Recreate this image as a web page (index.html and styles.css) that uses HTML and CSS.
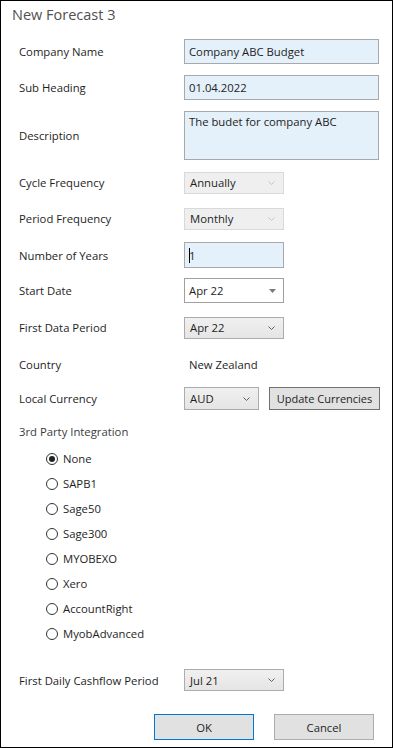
FILE: index.html
```html
<!DOCTYPE html>
<html lang="en">

<head>
    <meta charset="utf-8">
    <meta name="viewport" content="width=device-width, initial-scale=1.0">
    <title>New Forecast 3</title>
    <link rel="stylesheet" href="styles.css">
</head>

<body>
    <main class="dialog">
        <div class="titel">New Forecast 3</div>

        <section class="form">
            <div class="row">
                <label class="lbl">Company Name</label>
                <div class="tekstboks">Company ABC Budget</div>
            </div>
            <div class="row">
                <label class="lbl">Sub Heading</label>
                <div class="tekstboks">01.04.2022</div>
            </div>
            <div class="row row-hoej">
                <label class="lbl">Description</label>
                <div class="tekstboks tekstboks-stor">The budet for company ABC</div>
            </div>
            <div class="row row-35">
                <label class="lbl">Cycle Frequency</label>
                <div class="combo combo-slukket">Annually
                    <svg class="pil" width="7" height="4" viewBox="0 0 7 4"><polyline points="0.5,0.5 3.5,3.5 6.5,0.5" fill="none" stroke="#c4c4c4" stroke-width="1"/></svg>
                </div>
            </div>
            <div class="row row-37">
                <label class="lbl">Period Frequency</label>
                <div class="combo combo-slukket">Monthly
                    <svg class="pil" width="7" height="4" viewBox="0 0 7 4"><polyline points="0.5,0.5 3.5,3.5 6.5,0.5" fill="none" stroke="#c4c4c4" stroke-width="1"/></svg>
                </div>
            </div>
            <div class="row">
                <label class="lbl">Number of Years</label>
                <div class="tekstboks tekstboks-kort"><span class="markoer"></span>1</div>
            </div>
            <div class="row row-35">
                <label class="lbl">Start Date</label>
                <div class="dato">Apr 22
                    <svg class="trekant" width="7" height="4" viewBox="0 0 7 4"><polygon points="0,0 7,0 3.5,4" fill="#7a7a7a"/></svg>
                </div>
            </div>
            <div class="row row-39">
                <label class="lbl">First Data Period</label>
                <div class="combo">Apr 22
                    <svg class="pil" width="7" height="4" viewBox="0 0 7 4"><polyline points="0.5,0.5 3.5,3.5 6.5,0.5" fill="none" stroke="#606060" stroke-width="1"/></svg>
                </div>
            </div>
            <div class="row row-34">
                <label class="lbl">Country</label>
                <span class="vaerdi">New Zealand</span>
            </div>
            <div class="row row-35">
                <label class="lbl">Local Currency</label>
                <div class="combo combo-smal">AUD
                    <svg class="pil" width="7" height="4" viewBox="0 0 7 4"><polyline points="0.5,0.5 3.5,3.5 6.5,0.5" fill="none" stroke="#606060" stroke-width="1"/></svg>
                </div>
                <button class="knap knap-opdater">Update Currencies</button>
            </div>
            <div class="row row-30">
                <span class="gruppe">3rd Party Integration</span>
            </div>

            <div class="radioer">
                <div class="radio"><span class="cirkel valgt"></span>None</div>
                <div class="radio"><span class="cirkel"></span>SAPB1</div>
                <div class="radio"><span class="cirkel"></span>Sage50</div>
                <div class="radio"><span class="cirkel"></span>Sage300</div>
                <div class="radio"><span class="cirkel"></span>MYOBEXO</div>
                <div class="radio"><span class="cirkel"></span>Xero</div>
                <div class="radio"><span class="cirkel"></span>AccountRight</div>
                <div class="radio"><span class="cirkel"></span>MyobAdvanced</div>
            </div>

            <div class="row row-cash">
                <label class="lbl">First Daily Cashflow Period</label>
                <div class="combo">Jul 21
                    <svg class="pil" width="7" height="4" viewBox="0 0 7 4"><polyline points="0.5,0.5 3.5,3.5 6.5,0.5" fill="none" stroke="#606060" stroke-width="1"/></svg>
                </div>
            </div>
        </section>

        <footer class="knapper">
            <button class="knap knap-ok">OK</button>
            <button class="knap">Cancel</button>
        </footer>
    </main>
</body>

</html>
```

FILE: styles.css
```css
* {
    box-sizing: border-box;
}

body {
    margin: 0;
    font-family: 'Open Sans', 'Noto Sans', sans-serif;
    font-size: 11.3px;
    color: #1e1e1e;
    background: #fff;
}

.dialog {
    width: 393px;
    height: 748px;
    border: 1px solid #000;
    display: flex;
    flex-direction: column;
}

.titel {
    height: 32px;
    padding: 4px 0 0 11px;
    font-size: 14.5px;
    color: #505050;
}

.form {
    padding-left: 18px;
}

.row {
    display: flex;
    align-items: center;
    height: 36px;
}

.row-hoej {
    height: 60px;
}

.row-35 {
    height: 35px;
}

.row-37 {
    height: 37px;
}

.row-39 {
    height: 39px;
}

.row-34 {
    height: 34px;
}

.row-30 {
    height: 30px;
}

.row-cash {
    margin-top: 16px;
}

.lbl {
    width: 165px;
    flex: none;
}

.tekstboks {
    width: 195px;
    height: 25px;
    border: 1px solid #a9a9a9;
    background: #e4f0fa;
    padding: 4px 4px;
    line-height: 15px;
}

.tekstboks-stor {
    height: 49px;
    padding-top: 2px;
}

.tekstboks-kort {
    width: 100px;
    height: 26px;
    display: flex;
    align-items: center;
}

.markoer {
    width: 1px;
    height: 15px;
    background: #000;
    margin-right: -1px;
}

.combo {
    width: 100px;
    height: 22px;
    border: 1px solid #acacac;
    background: linear-gradient(#f0f0f0, #e5e5e5);
    display: flex;
    align-items: center;
    justify-content: space-between;
    padding: 0 8px 0 5px;
}

.combo-slukket {
    background: #efefef;
    border-color: #d9d9d9;
}

.combo-smal {
    width: 75px;
    height: 23px;
}

.dato {
    width: 100px;
    height: 25px;
    border: 1px solid #a0a0a0;
    background: #fff;
    display: flex;
    align-items: center;
    justify-content: space-between;
    padding: 0 7px 0 4px;
}

.vaerdi {
    padding-left: 5px;
}

.gruppe {
    color: #3c3c3c;
}

.radioer {
    padding-left: 27px;
}

.radio {
    height: 25px;
    display: flex;
    align-items: center;
}

.cirkel {
    width: 12px;
    height: 12px;
    border: 1px solid #333;
    border-radius: 50%;
    margin-right: 5px;
    display: flex;
    align-items: center;
    justify-content: center;
}

.valgt::after {
    content: "";
    width: 6px;
    height: 6px;
    border-radius: 50%;
    background: #222;
}

.knap {
    font-family: inherit;
    font-size: 11.3px;
    color: #1e1e1e;
    background: #e1e1e1;
    border: 1px solid #adadad;
    width: 100px;
    height: 26px;
    padding: 0;
}

.knap-opdater {
    width: 111px;
    height: 23px;
    margin-left: 10px;
    border-color: #707070;
    font-size: 11px;
    white-space: nowrap;
}

.knap-ok {
    border-color: #0078d7;
}

.knapper {
    display: flex;
    justify-content: flex-end;
    gap: 20px;
    padding: 16px 18px 0 0;
}
```
